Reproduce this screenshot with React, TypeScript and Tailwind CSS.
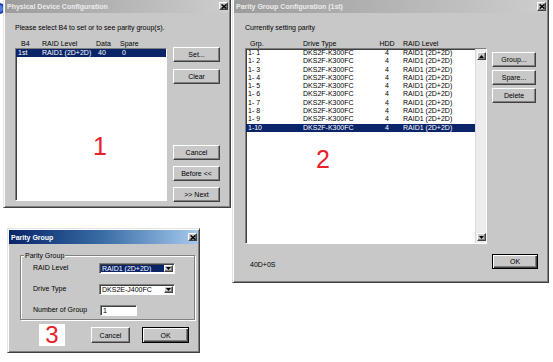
import React from "react";

const FONT = "font-['Liberation_Sans',Arial,Helvetica,sans-serif]";
const RAISED =
  "bg-[#c8c8c8] border border-t-white border-l-white border-r-[#404040] border-b-[#404040] shadow-[inset_-1px_-1px_0_#808080]";
const SUNKEN =
  "border border-t-[#808080] border-l-[#808080] border-r-white border-b-white shadow-[inset_1px_1px_0_#404040]";

function CloseBtn({ w, h }: { w: string; h: string }) {
  return (
    <div className={`${w} ${h} ${RAISED} flex items-center justify-center`}>
      <svg width="6" height="5" viewBox="0 0 6 5">
        <path d="M0.6 0.4 L5.4 4.6 M5.4 0.4 L0.6 4.6" stroke="#000" strokeWidth="1.4" />
      </svg>
    </div>
  );
}

function TitleBar({ title, active, closeW, closeH }: { title: string; active: boolean; closeW: string; closeH: string }) {
  return (
    <div
      className={`h-[14px] shrink-0 flex items-center justify-between pl-[2px] pr-[1px] ${
        active
          ? "bg-gradient-to-r from-[#0a246a] via-[#3a6ea5] to-[#a6caf0] text-white"
          : "bg-gradient-to-r from-[#9c9c9c] to-[#cdcdcd] text-[#ececec]"
      }`}
    >
      <span className="text-[7px] font-bold leading-none whitespace-nowrap">{title}</span>
      <CloseBtn w={closeW} h={closeH} />
    </div>
  );
}

function Btn({ label, className, def }: { label: string; className: string; def?: boolean }) {
  return (
    <div
      className={`${className} flex items-center justify-center text-[7px] leading-none text-black ${
        def
          ? "bg-[#c8c8c8] border border-black shadow-[inset_1px_1px_0_#fff,inset_-1px_-1px_0_#404040,inset_-2px_-2px_0_#808080]"
          : RAISED
      }`}
    >
      {label}
    </div>
  );
}

function Frame({ className, children }: { className: string; children: React.ReactNode }) {
  return (
    <div
      className={`absolute flex flex-col bg-[#c8c8c8] border border-t-[#e4e4e4] border-l-[#e4e4e4] border-r-[#404040] border-b-[#404040] shadow-[inset_1px_1px_0_#fff,inset_-1px_-1px_0_#808080] p-[1px] ${className}`}
    >
      {children}
    </div>
  );
}

function Arrow({ up }: { up?: boolean }) {
  return (
    <svg width="5" height="3" viewBox="0 0 5 3">
      <path d={up ? "M0 3 L2.5 0 L5 3 Z" : "M0 0 L5 0 L2.5 3 Z"} fill="#000" />
    </svg>
  );
}

function Combo({ text, selected }: { text: string; selected?: boolean }) {
  return (
    <div className={`w-[76px] h-[11px] bg-white ${SUNKEN} flex items-stretch p-[1px]`}>
      <div
        className={`flex-1 flex items-center pl-[1px] text-[7px] leading-none ${
          selected ? "bg-[#0a246a] text-white" : "text-black"
        }`}
      >
        {text}
      </div>
      <div className={`w-[9px] ${RAISED} flex items-center justify-center`}>
        <Arrow />
      </div>
    </div>
  );
}

const rows2 = ["1- 1", "1- 2", "1- 3", "1- 4", "1- 5", "1- 6", "1- 7", "1- 8", "1- 9", "1-10"];

export default function App() {
  return (
    <div className={`relative w-[553px] h-[362px] bg-white overflow-hidden text-black ${FONT}`}>
      {/* bit of something behind, top-left */}
      <svg className="absolute left-0 top-[2px]" width="6" height="13" viewBox="0 0 6 13">
        <path d="M0 1 Q5 2 5 6 Q5 11 0 12 Z" fill="#1a3fa8" />
        <path d="M0 3 Q3 4 3 6.5 Q3 9 0 10 Z" fill="#4f7be0" />
      </svg>

      {/* Window 1 */}
      <Frame className="left-[3px] top-[-3px] w-[228px] h-[211px]">
        <TitleBar title="Physical Device Configuration" active={false} closeW="w-[9px]" closeH="h-[8px]" />
        <div className="flex flex-col pl-[10px] text-[7px]">
          <div className="mt-[10px] leading-[9px] whitespace-nowrap">
            Please select B4 to set or to see parity group(s).
          </div>
          <div className="flex mt-[7px]">
            <div className="flex flex-col w-[152px]">
              <div className="h-[9px] leading-[9px] flex pl-[6px] whitespace-nowrap">
                <span className="w-[21px]">B4</span>
                <span className="w-[54px]">RAID Level</span>
                <span className="w-[24px]">Data</span>
                <span>Spare</span>
              </div>
              <div className={`relative h-[153px] bg-white ${SUNKEN}`}>
                <div className="h-[8.3px] leading-[8.3px] flex pl-[2px] bg-[#0a246a] text-white whitespace-nowrap">
                  <span className="w-[24px]">1st</span>
                  <span className="w-[56px]">RAID1 (2D+2D)</span>
                  <span className="w-[24px]">40</span>
                  <span>0</span>
                </div>
                <div className="absolute left-[77px] top-[85px] text-[25px] leading-[25px] text-[#e8202a]">1</div>
              </div>
            </div>
            <div className="flex flex-col ml-[6px] w-[47px] mt-[8px]">
              <Btn label="Set..." className="h-[15px]" />
              <Btn label="Clear" className="h-[15px] mt-[7px]" />
              <Btn label="Cancel" className="h-[15px] mt-[61px]" />
              <Btn label="Before <<" className="h-[15px] mt-[6px]" />
              <Btn label=">> Next" className="h-[15px] mt-[6px]" />
            </div>
          </div>
        </div>
      </Frame>

      {/* Window 2 */}
      <Frame className="left-[232px] top-[-3px] w-[317px] h-[286px]">
        <TitleBar title="Parity Group Configuration (1st)" active={false} closeW="w-[9px]" closeH="h-[9px]" />
        <div className="flex flex-col pl-[11px] text-[7px]">
          <div className="mt-[10px] leading-[9px] whitespace-nowrap">Currently setting parity</div>
          <div className="flex mt-[7px]">
            <div className="flex flex-col w-[242px]">
              <div className="h-[9px] leading-[9px] flex pl-[5px] whitespace-nowrap">
                <span className="w-[53px]">Grp.</span>
                <span className="w-[76px]">Drive Type</span>
                <span className="w-[16px] text-center">HDD</span>
                <span className="ml-[8px]">RAID Level</span>
              </div>
              <div className={`relative h-[196px] bg-white ${SUNKEN} flex`}>
                <div className="flex-1 flex flex-col">
                  {rows2.map((g, i) => (
                    <div
                      key={g}
                      className={`h-[8.3px] leading-[8.3px] flex pl-[2px] whitespace-nowrap ${
                        i === 9 ? "bg-[#0a246a] text-white" : ""
                      }`}
                    >
                      <span className="w-[55px]">{g}</span>
                      <span className="w-[76px]">DKS2F-K300FC</span>
                      <span className="w-[16px] text-center">4</span>
                      <span className="ml-[8px]">RAID1 (2D+2D)</span>
                    </div>
                  ))}
                </div>
                <div className="w-[11px] flex flex-col justify-between bg-[#ececec] border-l border-[#d8d8d8] pl-[1px] pt-[3px] pb-[2px]">
                  <div className={`h-[8px] w-[9px] ${RAISED} flex items-center justify-center`}>
                    <Arrow up />
                  </div>
                  <div className={`h-[8px] w-[9px] ${RAISED} flex items-center justify-center`}>
                    <Arrow />
                  </div>
                </div>
                <div className="absolute left-[70px] top-[98px] text-[25px] leading-[25px] text-[#e8202a]">2</div>
              </div>
            </div>
            <div className="flex flex-col ml-[5px] w-[44px] mt-[13px]">
              <Btn label="Group..." className="h-[15px]" />
              <Btn label="Spare..." className="h-[15px] mt-[3px]" />
              <Btn label="Delete" className="h-[15px] mt-[3px]" />
            </div>
          </div>
          <div className="flex mt-[10px]">
            <div className="w-[247px] pl-[5px] mt-[6px] leading-[9px]">40D+0S</div>
            <Btn label="OK" className="w-[46px] h-[15px]" def />
          </div>
        </div>
      </Frame>

      {/* Window 3 */}
      <Frame className="left-[7px] top-[228px] w-[193px] h-[125px]">
        <TitleBar title="Parity Group" active closeW="w-[9px]" closeH="h-[8px]" />
        <div className="flex flex-col text-[7px]">
          <div className="relative ml-[11px] mt-[11px] w-[175px] h-[65px] border border-[#808080] shadow-[1px_1px_0_#fff,inset_1px_1px_0_#fff] pt-[7px] flex flex-col">
            <div className="absolute left-[3px] top-[-5px] bg-[#c8c8c8] px-[1px] leading-[9px]">Parity Group</div>
            <div className="flex items-center h-[11px]">
              <span className="pl-[12px] w-[78px]">RAID Level</span>
              <Combo text="RAID1 (2D+2D)" selected />
            </div>
            <div className="flex items-center h-[11px] mt-[10px]">
              <span className="pl-[12px] w-[78px]">Drive Type</span>
              <Combo text="DKS2E-J400FC" />
            </div>
            <div className="flex items-center h-[11px] mt-[10px]">
              <span className="pl-[12px] w-[79px]">Number of Group</span>
              <div className={`w-[37px] h-[11px] bg-white ${SUNKEN} flex items-center pl-[2px] leading-none`}>1</div>
            </div>
          </div>
          <div className="flex items-start mt-[4px]">
            <div className="ml-[30px] w-[26px] h-[22px] bg-white flex items-center justify-center text-[24px] leading-none text-[#e8202a]">
              3
            </div>
            <Btn label="Cancel" className="ml-[26px] mt-[3px] w-[39px] h-[16px]" />
            <Btn label="OK" className="ml-[12px] mt-[3px] w-[47px] h-[16px]" def />
          </div>
        </div>
      </Frame>
    </div>
  );
}
